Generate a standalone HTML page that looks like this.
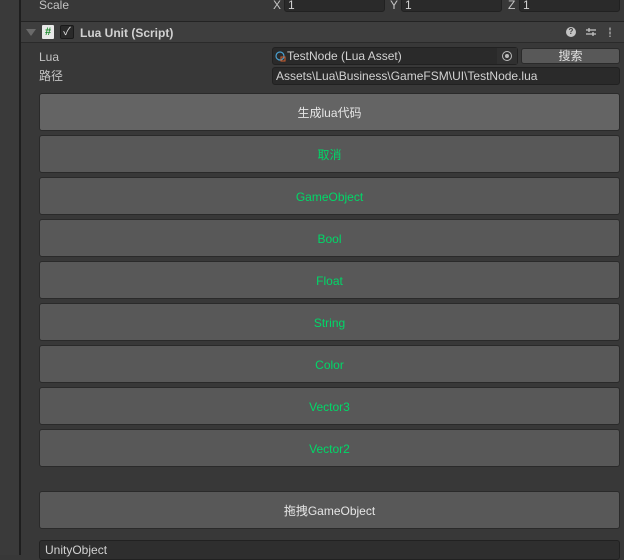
<!DOCTYPE html>
<html><head><meta charset="utf-8"><style>
*{box-sizing:border-box;margin:0;padding:0}
body{width:624px;height:555px;overflow:hidden;background:#383838;font-family:"Liberation Sans","Noto Sans CJK SC",sans-serif;font-size:12px;color:#c4c4c4;position:relative}
.a{position:absolute}
.f{position:absolute;background:#2a2a2a;border:1px solid #212121;border-radius:3px;color:#d2d2d2;font-size:12px;line-height:14px;padding-left:3px;white-space:nowrap;overflow:hidden}
.b{position:absolute;left:39px;width:581px;height:38px;background:#585858;border:1px solid #2a2a2a;border-radius:3px;color:#00d868;text-align:center;line-height:39px;font-size:12px}
</style></head><body>
<div class="a" style="left:0;top:0;width:19px;height:555px;background:#3a3a3a"></div>
<div class="a" style="left:19px;top:0;width:2px;height:555px;background:#1e1e1e"></div>
<div class="a" style="left:39px;top:-3px;line-height:16px">Scale</div>
<div class="a" style="left:273px;top:-3px;line-height:16px">X</div>
<div class="f" style="left:284px;top:-4px;width:101px;height:16px;line-height:16px">1</div>
<div class="a" style="left:390px;top:-3px;line-height:16px">Y</div>
<div class="f" style="left:401px;top:-4px;width:101px;height:16px;line-height:16px">1</div>
<div class="a" style="left:508px;top:-3px;line-height:16px">Z</div>
<div class="f" style="left:519px;top:-4px;width:101px;height:16px;line-height:16px">1</div>
<div class="a" style="left:21px;top:21px;width:603px;height:1px;background:#232323"></div>
<div class="a" style="left:21px;top:22px;width:603px;height:20px;background:#3e3e3e"></div>
<div class="a" style="left:21px;top:42px;width:603px;height:1px;background:#2a2a2a"></div>
<div class="a" style="left:26px;top:29px;width:0;height:0;border-left:5px solid transparent;border-right:5px solid transparent;border-top:7px solid #6a6a6a"></div>
<div class="a" style="left:42px;top:25px;width:12px;height:14px;background:#e8e8e8;border-radius:1px;color:#1c8a2c;font-size:11px;font-weight:bold;text-align:center;line-height:14px">#</div>
<div class="a" style="left:60px;top:25px;width:14px;height:14px;background:#2a2a2a;border:1px solid #1a1a1a;border-radius:2px;color:#e0e0e0;font-size:11px;text-align:center;line-height:12px">✓</div>
<div class="a" style="left:80px;top:26px;line-height:15px;font-weight:bold;color:#d2d2d2">Lua Unit (Script)</div>
<div class="a" style="left:566px;top:27px;width:10px;height:10px;border-radius:50%;background:#c4c4c4;color:#3e3e3e;font-size:8px;font-weight:bold;text-align:center;line-height:10px">?</div>
<svg class="a" style="left:585px;top:26px" width="12" height="12"><path d="M1 4H11M1 8H11M4 2V6M8 6V10" stroke="#c4c4c4" stroke-width="1.3"/></svg>
<div class="a" style="left:609px;top:27px;width:2px;height:10px;background:radial-gradient(#c4c4c4 50%,transparent 55%) 0 0/2px 4px"></div>
<div class="a" style="left:39px;top:50px;line-height:15px">Lua</div>
<div class="a" style="left:39px;top:69px;line-height:15px">路径</div>
<div class="f" style="left:272px;top:47px;width:246px;height:18px;line-height:17px;padding-left:14px">TestNode (Lua Asset)</div>
<svg class="a" style="left:275px;top:51px" width="11" height="11"><circle cx="5" cy="5" r="4" fill="none" stroke="#4aa0d0" stroke-width="1.2"/><rect x="6" y="6" width="4" height="4" fill="none" stroke="#d06030"/></svg>
<div class="a" style="left:497px;top:48px;width:20px;height:16px;background:#303030"></div>
<div class="a" style="left:502px;top:51px;width:10px;height:10px;border:1px solid #bbb;border-radius:50%"></div>
<div class="a" style="left:505px;top:54px;width:4px;height:4px;background:#bbb;border-radius:50%"></div>
<div class="a" style="left:521px;top:48px;width:99px;height:16px;background:#585858;border:1px solid #2a2a2a;border-radius:3px;text-align:center;line-height:15px;color:#e0e0e0">搜索</div>
<div class="f" style="left:272px;top:67px;width:348px;height:18px;line-height:17px">Assets\Lua\Business\GameFSM\UI\TestNode.lua</div>
<div class="b" style="top:93px;background:#646464;color:#e6e6e6">生成lua代码</div>
<div class="b" style="top:135px">取消</div>
<div class="b" style="top:177px">GameObject</div>
<div class="b" style="top:219px">Bool</div>
<div class="b" style="top:261px">Float</div>
<div class="b" style="top:303px">String</div>
<div class="b" style="top:345px">Color</div>
<div class="b" style="top:387px">Vector3</div>
<div class="b" style="top:429px">Vector2</div>
<div class="b" style="top:491px;color:#e6e6e6">拖拽GameObject</div>
<div class="f" style="left:39px;top:540px;width:581px;height:20px;line-height:19px;padding-left:5px;background:#2e2e2e">UnityObject</div>
</body></html>
